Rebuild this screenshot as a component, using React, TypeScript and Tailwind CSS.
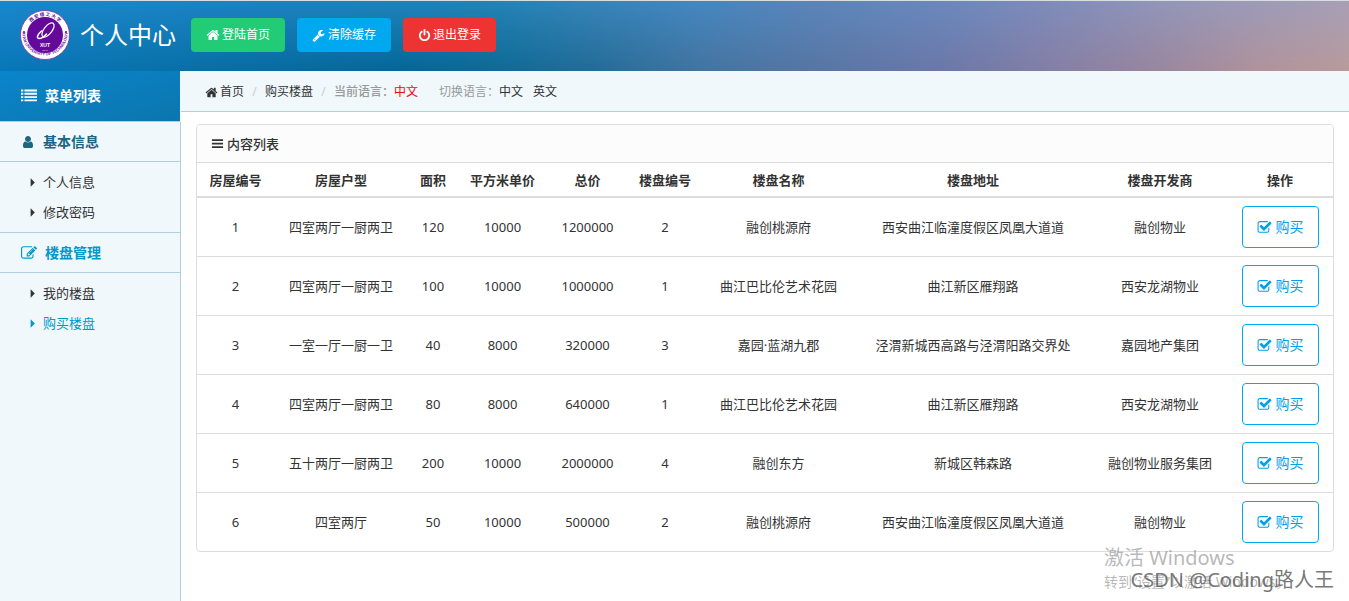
import type { ReactNode } from "react";

interface House {
  id: number;
  layout: string;
  area: number;
  unitPrice: number;
  total: number;
  estateId: number;
  estateName: string;
  address: string;
  developer: string;
}

const HOUSES: House[] = [
  { id: 1, layout: "四室两厅一厨两卫", area: 120, unitPrice: 10000, total: 1200000, estateId: 2, estateName: "融创桃源府", address: "西安曲江临潼度假区凤凰大道道", developer: "融创物业" },
  { id: 2, layout: "四室两厅一厨两卫", area: 100, unitPrice: 10000, total: 1000000, estateId: 1, estateName: "曲江巴比伦艺术花园", address: "曲江新区雁翔路", developer: "西安龙湖物业" },
  { id: 3, layout: "一室一厅一厨一卫", area: 40, unitPrice: 8000, total: 320000, estateId: 3, estateName: "嘉园·蓝湖九郡", address: "泾渭新城西高路与泾渭阳路交界处", developer: "嘉园地产集团" },
  { id: 4, layout: "四室两厅一厨两卫", area: 80, unitPrice: 8000, total: 640000, estateId: 1, estateName: "曲江巴比伦艺术花园", address: "曲江新区雁翔路", developer: "西安龙湖物业" },
  { id: 5, layout: "五十两厅一厨两卫", area: 200, unitPrice: 10000, total: 2000000, estateId: 4, estateName: "融创东方", address: "新城区韩森路", developer: "融创物业服务集团" },
  { id: 6, layout: "四室两厅", area: 50, unitPrice: 10000, total: 500000, estateId: 2, estateName: "融创桃源府", address: "西安曲江临潼度假区凤凰大道道", developer: "融创物业" },
];

/** Column titles with their proportional widths. */
const COLUMNS = [
  { title: "房屋编号", width: "w-[77px]" },
  { title: "房屋户型", width: "w-[134px]" },
  { title: "面积", width: "w-[50px]" },
  { title: "平方米单价", width: "w-[89px]" },
  { title: "总价", width: "w-[81px]" },
  { title: "楼盘编号", width: "w-[74px]" },
  { title: "楼盘名称", width: "w-[153px]" },
  { title: "楼盘地址", width: "w-[236px]" },
  { title: "楼盘开发商", width: "w-[138px]" },
  { title: "操作", width: "w-[104px] pr-0.5" },
];

const ICONS = {
  home: "M1472 992v480q0 26-19 45t-45 19h-384v-384h-256v384h-384q-26 0-45-19t-19-45v-480q0-1 .5-3t.5-3l575-474 575 474q1 2 1 6zm223-69l-62 74q-8 9-21 11h-3q-13 0-21-7l-692-577-692 577q-12 8-24 7-13-2-21-11l-62-74q-8-10-7-23.5t11-21.5l719-599q32-26 76-26t76 26l244 204v-195q0-14 9-23t23-9h192q14 0 23 9t9 23v408l219 182q10 8 11 21.5t-7 23.5z",
  wrench: "M448 1472q0-26-19-45t-45-19-45 19-19 45 19 45 45 19 45-19 19-45zm644-420l-682 682q-37 37-90 37-52 0-91-37l-106-108q-38-36-38-90 0-53 38-91l681-681q39 98 114.5 173.5t173.5 114.5zm634-435q0 39-23 106-47 134-164.5 217.5t-258.5 83.5q-185 0-316.5-131.5t-131.5-316.5 131.5-316.5 316.5-131.5q58 0 121.5 16.5t107.5 46.5q16 11 16 28t-16 28l-293 169v224l193 107q5-3 79-48.5t135.5-81 70.5-35.5q15 0 23.5 10t8.5 25z",
  power: "M1664 896q0 156-61 298t-164 245-245 164-298 61-298-61-245-164-164-245-61-298q0-182 80.5-343t226.5-270q43-32 95.5-25t83.5 50q32 42 24.5 94.5t-49.5 84.5q-98 74-151.5 181t-53.5 228q0 104 40.5 198.5t109.5 163.5 163.5 109.5 198.5 40.5 198.5-40.5 163.5-109.5 109.5-163.5 40.5-198.5q0-121-53.5-228t-151.5-181q-42-32-49.5-84.5t24.5-94.5q31-43 84-50t95 25q146 109 226.5 270t80.5 343zm-640-768v640q0 52-38 90t-90 38-90-38-38-90v-640q0-52 38-90t90-38 90 38 38 90z",
  user: "M1536 1399q0 109-62.5 187t-150.5 78h-854q-88 0-150.5-78t-62.5-187q0-85 8.5-160.5t31.5-152 58.5-131 94-89 134.5-34.5q131 128 313 128t313-128q76 0 134.5 34.5t94 89 58.5 131 31.5 152 8.5 160.5zm-256-887q0 159-112.5 271.5t-271.5 112.5-271.5-112.5-112.5-271.5 112.5-271.5 271.5-112.5 271.5 112.5 112.5 271.5z",
  edit: "M888 1184l116-116-152-152-116 116v56h96v96h56zm440-720q-16-16-33 1l-350 350q-17 17-1 33t33-1l350-350q17-17 1-33zm80 594v190q0 119-84.5 203.5t-203.5 84.5h-832q-119 0-203.5-84.5t-84.5-203.5v-832q0-119 84.5-203.5t203.5-84.5h832q63 0 117 25 15 7 18 23 3 17-9 29l-49 49q-14 14-32 8-23-6-45-6h-832q-66 0-113 47t-47 113v832q0 66 47 113t113 47h832q66 0 113-47t47-113v-126q0-13 9-22l64-64q15-15 35-7t20 29zm-96-738l288 288-672 672h-288v-288zm444 132l-92 92-288-288 92-92q28-28 68-28t68 28l152 152q28 28 28 68t-28 68z",
  check: "M1472 930v318q0 119-84.5 203.5t-203.5 84.5h-832q-119 0-203.5-84.5t-84.5-203.5v-832q0-119 84.5-203.5t203.5-84.5h832q63 0 117 25 15 7 18 23 3 17-9 29l-49 49q-10 10-23 10-3 0-9-2-23-6-45-6h-832q-66 0-113 47t-47 113v832q0 66 47 113t113 47h832q66 0 113-47t47-113v-254q0-13 9-22l64-64q10-10 23-10 6 0 12 3 20 8 20 29zm231-489l-814 814q-24 24-57 24t-57-24l-430-430q-24-24-24-57t24-57l110-110q24-24 57-24t57 24l263 263 647-647q24-24 57-24t57 24l110 110q24 24 24 57t-24 57z",
  list: "M0 1280h256v210h-256zM0 910h256v210h-256zM0 540h256v210h-256zM384 1280h1408v210h-1408zM384 910h1408v210h-1408zM384 540h1408v210h-1408zM0 170h256v210h-256zM384 170h1408v210h-1408z",
  bars: "M128 1280h1536v240h-1536zM128 790h1536v240h-1536zM128 300h1536v240h-1536z",
  caret: "M640 320l576 576-576 576z",
};

function Icon({ name, className }: { readonly name: keyof typeof ICONS; readonly className: string }) {
  return (
    <svg viewBox="0 0 1792 1792" fill="currentColor" aria-hidden="true" className={`shrink-0 ${className}`}>
      <path d={ICONS[name]} />
    </svg>
  );
}

function Logo() {
  return (
    <svg viewBox="0 0 100 100" aria-hidden="true" className="size-[50px] shrink-0 overflow-visible">
      <defs>
        <path id="ring-top" d="M12 50a38 38 0 0 1 76 0" />
        <path id="ring-bottom" d="M5 46a45 45 0 0 0 90 0" />
      </defs>
      <circle cx="50" cy="50" r="49" fill="#fff" stroke="#7a2ba8" strokeWidth="1.5" />
      <circle cx="50" cy="50" r="36" fill="#65099a" />
      <g fill="#65099a" fontWeight="700">
        <text fontSize="9" textAnchor="middle" className="font-['Noto_Sans_CJK_SC',sans-serif]">
          <textPath href="#ring-top" startOffset="50%">西 安 理 工 大 学</textPath>
        </text>
        <text fontSize="8" textAnchor="middle" className="font-['Liberation_Sans',sans-serif]">
          <textPath href="#ring-bottom" startOffset="50%">XI'AN UNIVERSITY OF TECHNOLOGY</textPath>
        </text>
      </g>
      <circle cx="8" cy="44" r="2" fill="#65099a" />
      <circle cx="92" cy="44" r="2" fill="#65099a" />
      <g fill="none" stroke="#fff" strokeLinecap="round">
        <ellipse cx="56" cy="40" rx="8" ry="17" transform="rotate(38 56 40)" strokeWidth="2.5" />
        <path d="M43 42c-8 7-11 14-5 15 5 0 11-4 15-9" strokeWidth="3" />
      </g>
      <g fill="#fff" textAnchor="middle" className="font-['Liberation_Sans',sans-serif]">
        <text x="50" y="73" fontSize="10" fontWeight="700">XUT</text>
        <text x="50" y="81" fontSize="5">1949</text>
      </g>
    </svg>
  );
}

function MenuGroup({
  icon,
  title,
  active = false,
  children,
}: {
  readonly icon: "user" | "edit";
  readonly title: string;
  readonly active?: boolean;
  readonly children: ReactNode;
}) {
  return (
    <section className="border-b border-[#b0cfdf] last:border-b-0">
      <h2
        className={`flex h-10 items-center gap-2 border-b border-[#b0cfdf] pl-[21px] text-sm font-bold ${
          active ? "text-[#0099cc]" : "text-[#1d6582]"
        }`}
      >
        <Icon name={icon} className={active ? "size-4" : "size-[14px]"} />
        {title}
      </h2>
      <ul className="py-[5px]">{children}</ul>
    </section>
  );
}

function MenuItem({ label, active = false }: { readonly label: string; readonly active?: boolean }) {
  return (
    <li>
      <a href="#" className={`flex h-[30px] items-center gap-1 pl-[26px] ${active ? "text-[#0099cc]" : "text-[#333]"}`}>
        <Icon name="caret" className="size-[13px]" />
        {label}
      </a>
    </li>
  );
}

/** The banner blends a bright top gradient into a darker bottom one. */
function Header() {
  return (
    <header className="relative border-t border-[#d8dedf] bg-[linear-gradient(to_right,#0877b8_0%,#0870a8_13%,#046799_30%,#0f6a96_37%,#236c98_44%,#4474a0_52%,#5676a4_60%,#6c78a8_70%,#857fa5_78%,#9a879f_86%,#b0929c_93%,#b99b9b_100%)]">
      <div className="absolute inset-0 bg-[linear-gradient(to_right,#1a87cc_0%,#1d82c0_20%,#2083b8_32%,#2483b5_37%,#3784b8_44%,#4587c0_52%,#5a85b9_60%,#6b88bd_70%,#7f8cba_78%,#9295b8_86%,#a79fb6_100%)] [mask-image:linear-gradient(to_bottom,black,transparent)]" />
      <div className="relative flex h-[70px] items-center pb-0.5 pl-5">
        <Logo />
        <h1 className="ml-[10px] text-2xl text-white">个人中心</h1>
        <nav className="ml-[15px] flex gap-3 text-xs text-white">
          <a href="#" className="flex h-[34px] items-center gap-0.5 rounded bg-[#22cc77] px-[15px]">
            <Icon name="home" className="size-[14px]" />
            登陆首页
          </a>
          <button type="button" className="flex h-[34px] items-center gap-[3px] rounded bg-[#00a8f0] px-[15px]">
            <Icon name="wrench" className="size-[13px]" />
            清除缓存
          </button>
          <button type="button" className="flex h-[34px] items-center gap-0.5 rounded bg-[#ee3333] px-[15px]">
            <Icon name="power" className="size-[13px]" />
            退出登录
          </button>
        </nav>
      </div>
    </header>
  );
}

function Breadcrumb() {
  return (
    <nav className="flex h-[41px] items-center border-b border-[#b0cfdf] bg-[#f0f8fc] pt-0.5 pl-6 text-xs text-[#333]">
      <a href="#" className="flex items-center gap-0.5">
        <Icon name="home" className="size-[13px]" />
        首页
      </a>
      <span className="w-[21px] text-center text-[#ccc]">/</span>
      <a href="#">购买楼盘</a>
      <span className="w-[21px] text-center text-[#ccc]">/</span>
      <span className="font-medium text-[#999]">当前语言：</span>
      <span className="text-[#ff0000]">中文</span>
      <span className="ml-[21px] text-[#999]">切换语言：</span>
      <a href="#">中文</a>
      <a href="#" className="ml-[10px]">英文</a>
    </nav>
  );
}

function HouseTable() {
  return (
    <table className="w-full table-fixed text-center">
      <thead>
        <tr className="h-[34px] border-b-2 border-[#ddd]">
          {COLUMNS.map((col) => (
            <th key={col.title} className={`font-bold ${col.width}`}>{col.title}</th>
          ))}
        </tr>
      </thead>
      <tbody>
        {HOUSES.map((house) => (
          <tr key={house.id} className="border-b border-[#ddd] last:border-b-0">
            <td>{house.id}</td>
            <td>{house.layout}</td>
            <td>{house.area}</td>
            <td>{house.unitPrice}</td>
            <td>{house.total}</td>
            <td>{house.estateId}</td>
            <td>{house.estateName}</td>
            <td>{house.address}</td>
            <td>{house.developer}</td>
            <td className="py-2 pr-0.5">
              <button
                type="button"
                className="inline-flex h-[42px] items-center gap-1 rounded border border-[#00a8f0] bg-white px-[14px] align-middle text-sm text-[#00a0e9]"
              >
                <Icon name="check" className="size-[15px]" />
                购买
              </button>
            </td>
          </tr>
        ))}
      </tbody>
    </table>
  );
}

export default function App() {
  return (
    <div className="relative flex min-h-screen flex-col overflow-hidden bg-white font-['Noto_Sans','Noto_Sans_CJK_SC',sans-serif] text-[13px] leading-5 text-[#333]">
      <Header />
      <div className="flex grow">
        <aside className="flex w-[181px] shrink-0 flex-col bg-[#f0f8fc]">
          <div className="mr-px flex h-[51px] items-center gap-2 border-b border-[#b0cfdf] bg-linear-to-br from-[#0a85cc] to-[#0b76ad] pl-[21px] text-sm font-bold text-white">
            <Icon name="list" className="size-4" />
            菜单列表
          </div>
          <div className="grow border-r border-[#b0cfdf]">
            <MenuGroup icon="user" title="基本信息">
              <MenuItem label="个人信息" />
              <MenuItem label="修改密码" />
            </MenuGroup>
            <MenuGroup icon="edit" title="楼盘管理" active>
              <MenuItem label="我的楼盘" />
              <MenuItem label="购买楼盘" active />
            </MenuGroup>
          </div>
        </aside>
        <div className="min-w-0 grow">
          <Breadcrumb />
          <main className="px-[15px] pt-3">
            <section className="overflow-hidden rounded border border-[#ddd]">
              <h2 className="flex h-[38px] items-center gap-[3px] border-b border-[#ddd] bg-[#fcfcfc] pl-[14px] font-medium">
                <Icon name="bars" className="size-[13px]" />
                内容列表
              </h2>
              <HouseTable />
            </section>
          </main>
        </div>
      </div>

      {/* Overlaid marks in the lower right corner */}
      <div className="pointer-events-none absolute right-[57px] bottom-[9px] w-[188px] whitespace-nowrap text-[#888]/60">
        <p className="text-xl leading-7">激活 Windows</p>
        <p className="text-sm">转到“设置”以激活 Windows。</p>
      </div>
      <p className="pointer-events-none absolute right-[15px] bottom-[7px] text-xl leading-7 text-[#555]/80">
        CSDN @Coding路人王
      </p>
    </div>
  );
}
